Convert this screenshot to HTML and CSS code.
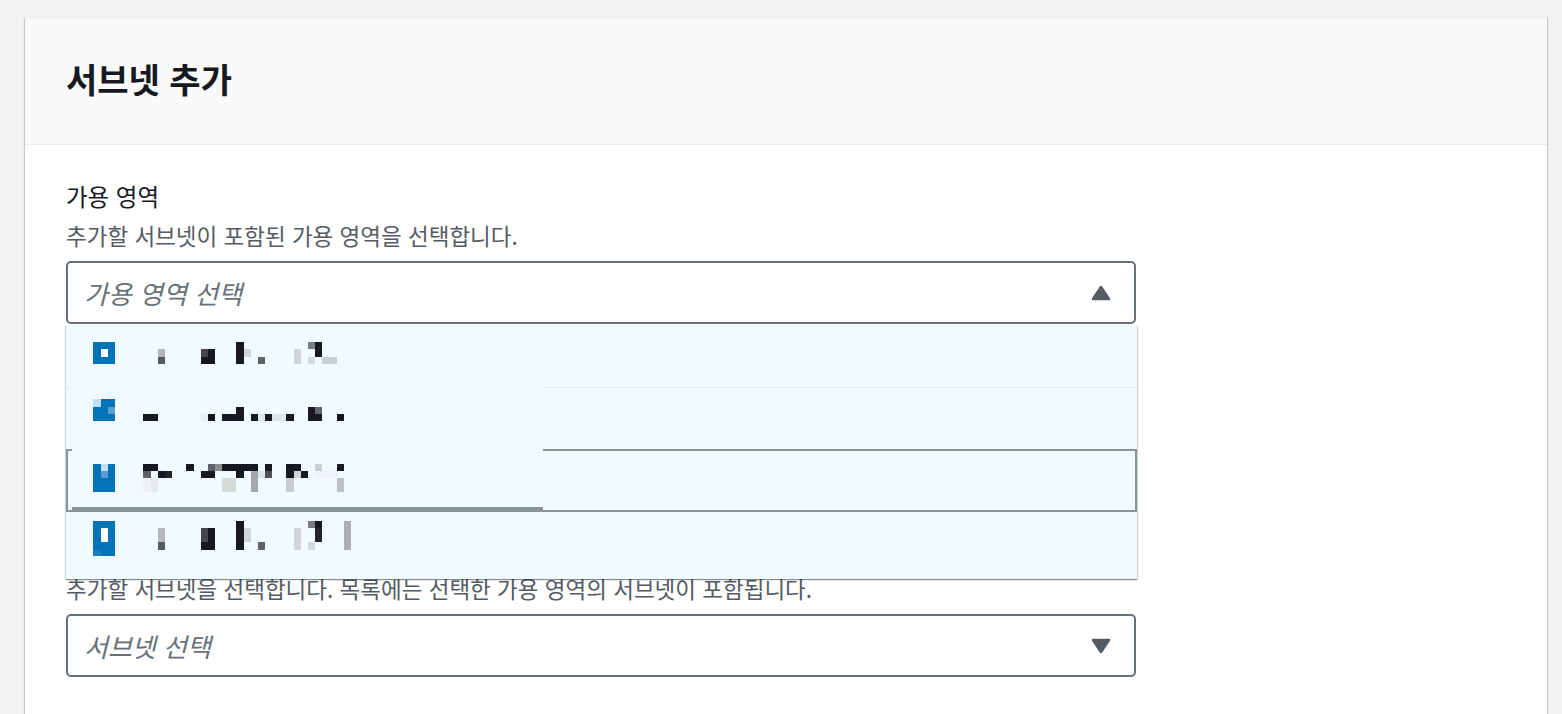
FILE: index.html
```html
<!DOCTYPE html>
<html lang="ko">
<head>
<meta charset="utf-8">
<title>서브넷 추가</title>
<link rel="stylesheet" href="styles.css">
</head>
<body>
<section class="card">
  <header class="card-header">
    <h2 class="card-title">서브넷 추가</h2>
  </header>
  <div class="card-body">
    <div class="field">
      <div class="field-label">가용 영역</div>
      <div class="field-desc">추가할 서브넷이 포함된 가용 영역을 선택합니다.</div>
      <div class="select-wrap">
        <div class="select">
          <span class="placeholder">가용 영역 선택</span>
          <svg class="caret" width="22" height="18" viewBox="0 0 22 18"><polygon points="3,15 11,3 19,15" fill="#545b64" stroke="#545b64" stroke-width="2.5" stroke-linejoin="round"/></svg>
        </div>
        <ul class="options">
          <li class="option option-first"></li>
          <li class="option option-second"></li>
          <li class="option option-highlighted"></li>
          <li class="option option-last"></li>
          <svg class="mosaic" width="471.9" height="228.8" viewBox="0 0 66 32" shape-rendering="crispEdges">
            <rect x="0" y="0" width="66" height="25" fill="#f1faff"/>
            <!-- option 1 -->
            <rect x="3" y="2" width="3" height="3" fill="#0073bb"/>
            <rect x="4" y="3" width="1" height="1" fill="#ffffff"/>
            <rect x="12" y="3" width="1" height="1" fill="#b5b9bb"/>
            <rect x="12" y="4" width="1" height="1" fill="#545b64"/>
            <rect x="18" y="3" width="1" height="1" fill="#44464c"/>
            <rect x="19" y="3" width="1" height="1" fill="#16191f"/>
            <rect x="18" y="4" width="2" height="1" fill="#16191f"/>
            <rect x="23" y="2" width="1" height="3" fill="#16191f"/>
            <rect x="24" y="3" width="1" height="1" fill="#d0d5d8"/>
            <rect x="26" y="4" width="1" height="1" fill="#5f6168"/>
            <rect x="31" y="3" width="1" height="2" fill="#d1d5d6"/>
            <rect x="33" y="2" width="1" height="1" fill="#7a7c80"/>
            <rect x="34" y="2" width="1" height="2" fill="#16191f"/>
            <rect x="33" y="4" width="1" height="1" fill="#d5dadb"/>
            <rect x="35" y="4" width="2" height="1" fill="#c8ced3"/>
            <!-- option 2 -->
            <rect x="3" y="10" width="3" height="3" fill="#0073bb"/>
            <rect x="3" y="10" width="1" height="1" fill="#c3dff3"/>
            <rect x="5" y="11" width="1" height="1" fill="#5a9fd4"/>
            <rect x="10" y="12" width="2" height="1" fill="#16191f"/>
            <rect x="18" y="12" width="1" height="1" fill="#e9eff4"/>
            <rect x="19" y="12" width="1" height="1" fill="#16191f"/>
            <rect x="21" y="12" width="3" height="1" fill="#16191f"/>
            <rect x="23" y="11" width="1" height="1" fill="#16191f"/>
            <rect x="25" y="12" width="1" height="1" fill="#16191f"/>
            <rect x="26" y="12" width="1" height="1" fill="#dfe7ea"/>
            <rect x="27" y="12" width="1" height="1" fill="#16191f"/>
            <rect x="28" y="12" width="2" height="1" fill="#dfe5ec"/>
            <rect x="30" y="12" width="1" height="1" fill="#16191f"/>
            <rect x="33" y="11" width="1" height="1" fill="#16191f"/>
            <rect x="34" y="11" width="1" height="1" fill="#62656b"/>
            <rect x="33" y="12" width="2" height="1" fill="#16191f"/>
            <rect x="37" y="12" width="1" height="1" fill="#16191f"/>
            <!-- option 3 -->
            <rect x="3" y="19" width="3" height="4" fill="#0073bb"/>
            <rect x="4" y="19" width="1" height="1" fill="#c6dff1"/>
            <rect x="4" y="20" width="1" height="1" fill="#5b9dd3"/>
            <rect x="10" y="19" width="2" height="1" fill="#16191f"/>
            <rect x="10" y="20" width="1" height="1" fill="#5f6268"/>
            <rect x="12" y="20" width="1" height="1" fill="#16191f"/>
            <rect x="13" y="20" width="1" height="1" fill="#232529"/>
            <rect x="10" y="21" width="1" height="2" fill="#eef1f7"/>
            <rect x="11" y="21" width="1" height="2" fill="#e4e8ef"/>
            <rect x="16" y="19" width="1" height="1" fill="#16191f"/>
            <rect x="19" y="19" width="1" height="1" fill="#5f6268"/>
            <rect x="20" y="19" width="1" height="1" fill="#8a8c90"/>
            <rect x="21" y="19" width="5" height="1" fill="#16191f"/>
            <rect x="27" y="19" width="1" height="1" fill="#16191f"/>
            <rect x="18" y="20" width="2" height="1" fill="#16191f"/>
            <rect x="23" y="20" width="1" height="1" fill="#16191f"/>
            <rect x="25" y="20" width="1" height="1" fill="#a3a6aa"/>
            <rect x="26" y="20" width="1" height="1" fill="#dde5ec"/>
            <rect x="27" y="20" width="1" height="1" fill="#4f525a"/>
            <rect x="21" y="21" width="2" height="2" fill="#d5dadb"/>
            <rect x="25" y="21" width="1" height="2" fill="#a7aaac"/>
            <rect x="30" y="19" width="2" height="1" fill="#16191f"/>
            <rect x="30" y="20" width="1" height="1" fill="#16191f"/>
            <rect x="31" y="20" width="1" height="1" fill="#d0d5d8"/>
            <rect x="32" y="20" width="1" height="1" fill="#16191f"/>
            <rect x="30" y="21" width="1" height="2" fill="#c8cdd0"/>
            <rect x="34" y="19" width="1" height="1" fill="#c9ced1"/>
            <rect x="37" y="19" width="1" height="1" fill="#16191f"/>
            <rect x="34" y="20" width="3" height="1" fill="#eef3fa"/>
            <rect x="37" y="21" width="1" height="2" fill="#bcc2c5"/>
            <rect x="0" y="25" width="66" height="0.72" fill="#879596"/>
            <!-- option 4 -->
            <rect x="3" y="27" width="3" height="5" fill="#0073bb"/>
            <rect x="4" y="28" width="1" height="2" fill="#ffffff"/>
            <rect x="3" y="31" width="1" height="1" fill="#1a7dc4"/>
            <rect x="12" y="28" width="1" height="2" fill="#b5b9bb"/>
            <rect x="12" y="30" width="1" height="1" fill="#545b64"/>
            <rect x="18" y="28" width="1" height="2" fill="#44464c"/>
            <rect x="18" y="30" width="1" height="1" fill="#16191f"/>
            <rect x="19" y="28" width="1" height="3" fill="#16191f"/>
            <rect x="23" y="27" width="1" height="4" fill="#16191f"/>
            <rect x="24" y="28" width="1" height="2" fill="#d0d5d8"/>
            <rect x="26" y="30" width="1" height="1" fill="#5f6168"/>
            <rect x="31" y="28" width="1" height="3" fill="#d1d5d6"/>
            <rect x="33" y="27" width="1" height="1" fill="#7a7c80"/>
            <rect x="34" y="27" width="1" height="1" fill="#16191f"/>
            <rect x="34" y="28" width="1" height="2" fill="#232529"/>
            <rect x="33" y="30" width="1" height="1" fill="#d5dadb"/>
            <rect x="38" y="27" width="1" height="4" fill="#acafb1"/>
          </svg>
        </ul>
      </div>
    </div>
    <div class="field field-subnet">
      <div class="field-label">서브넷</div>
      <div class="field-desc">추가할 서브넷을 선택합니다. 목록에는 선택한 가용 영역의 서브넷이 포함됩니다.</div>
      <div class="select-wrap">
        <div class="select">
          <span class="placeholder">서브넷 선택</span>
          <svg class="caret" width="22" height="18" viewBox="0 0 22 18"><polygon points="3,3 19,3 11,15" fill="#545b64" stroke="#545b64" stroke-width="2.5" stroke-linejoin="round"/></svg>
        </div>
      </div>
    </div>
  </div>
</section>
</body>
</html>
```

FILE: styles.css
```css
html, body {
  margin: 0;
  padding: 0;
}

body {
  background: #f2f3f3;
  padding: 17px 15px 0 25px;
  font-family: "Noto Sans CJK KR", "Noto Sans", sans-serif;
  color: #16191f;
  overflow: hidden;
  height: 714px;
  box-sizing: border-box;
}

.card {
  background: #ffffff;
  border-top: 1px solid #eaeded;
  box-shadow: 0 1px 1px 0 rgba(0, 28, 36, 0.3), 1px 1px 1px 0 rgba(0, 28, 36, 0.15), -1px 1px 1px 0 rgba(0, 28, 36, 0.15);
  min-height: 720px;
}

.card-header {
  background: #fafafa;
  border-bottom: 1px solid #eaeded;
  height: 127px;
  box-sizing: border-box;
  display: flex;
  align-items: center;
  padding: 0 41px 5px;
}

.card-title {
  margin: 0;
  font-size: 34px;
  font-weight: 700;
  line-height: 1;
  color: #16191f;
}

.card-body {
  padding: 36px 41px 0;
}

.field {
  width: 1070px;
}

.field-label {
  font-size: 23.5px;
  line-height: 30px;
  color: #16191f;
}

.field-desc {
  font-size: 22.5px;
  line-height: 30px;
  color: #545b64;
  margin-top: 9px;
}

.select-wrap {
  position: relative;
  margin-top: 11px;
}

.select {
  height: 63px;
  box-sizing: border-box;
  border: 2px solid #687078;
  border-radius: 5px;
  background: #ffffff;
  display: flex;
  align-items: center;
  justify-content: space-between;
  padding: 0 22px 0 16px;
}

.placeholder {
  font-size: 26px;
  font-style: italic;
  color: #687078;
  line-height: 1;
}

.caret {
  display: block;
}

.options {
  position: absolute;
  top: 100%;
  left: 0;
  right: -1px;
  margin: 1px 0 0;
  padding: 0;
  list-style: none;
  background: #f1faff;
  box-shadow: 0 1px 1px 0 rgba(0, 28, 36, 0.3), 1px 1px 1px 0 rgba(0, 28, 36, 0.15), -1px 1px 1px 0 rgba(0, 28, 36, 0.15);
  z-index: 5;
}

.option {
  box-sizing: border-box;
}

.option-first {
  height: 63px;
  border-bottom: 1px solid #eaeded;
}

.option-second {
  height: 61px;
}

.option-highlighted {
  height: 63px;
  border: 2px solid #879596;
}

.option-last {
  height: 67px;
}

.mosaic {
  position: absolute;
  left: 5.5px;
  top: 2.7px;
}

.field-subnet {
  margin-top: 210px;
}

.field-subnet .select-wrap {
  margin-top: 11px;
}
```
